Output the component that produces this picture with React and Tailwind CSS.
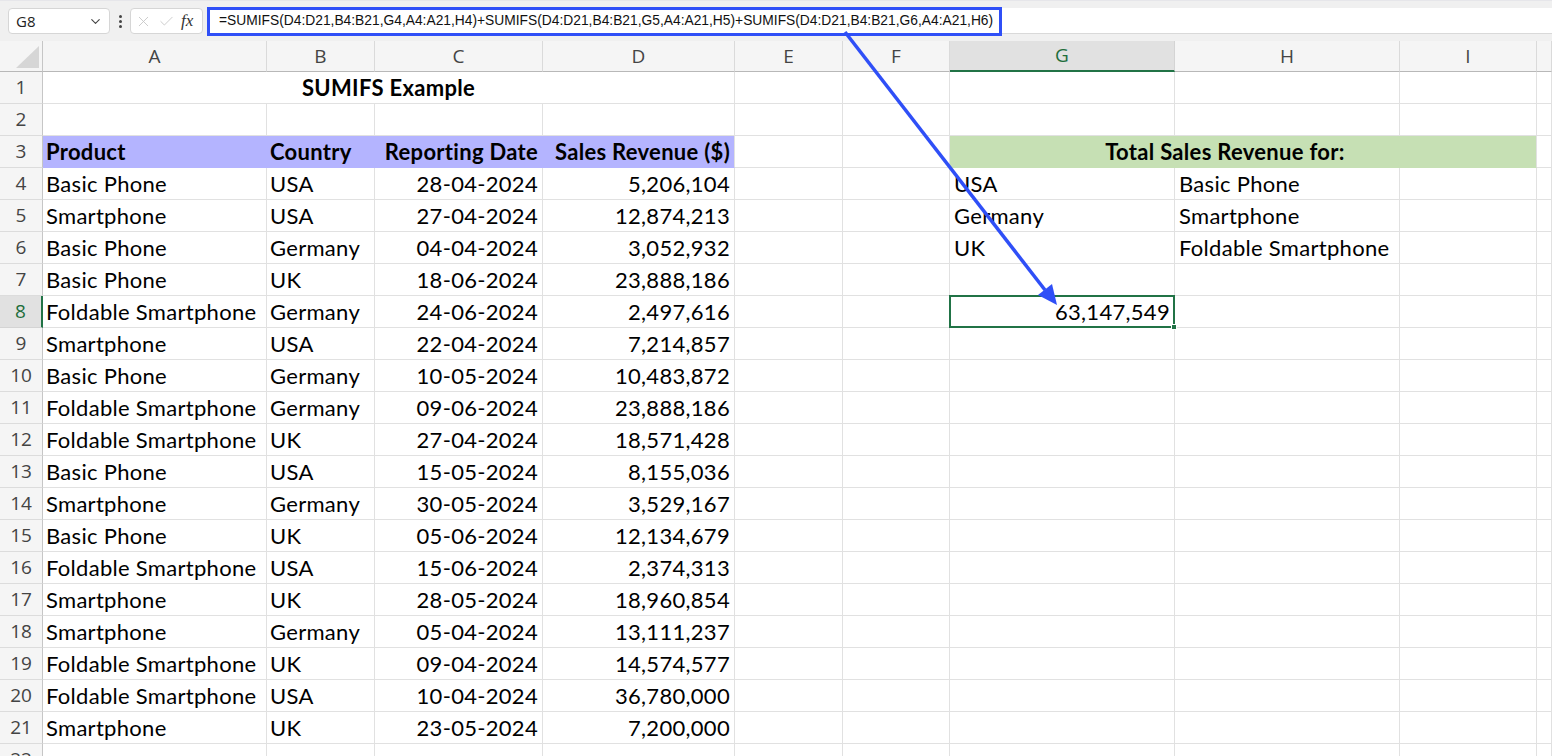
import React from "react";
import { ChevronDown, X, Check } from "lucide-react";

const cols = ["A", "B", "C", "D", "E", "F", "G", "H", "I", ""];

const data = [
  ["Basic Phone", "USA", "28-04-2024", "5,206,104"],
  ["Smartphone", "USA", "27-04-2024", "12,874,213"],
  ["Basic Phone", "Germany", "04-04-2024", "3,052,932"],
  ["Basic Phone", "UK", "18-06-2024", "23,888,186"],
  ["Foldable Smartphone", "Germany", "24-06-2024", "2,497,616"],
  ["Smartphone", "USA", "22-04-2024", "7,214,857"],
  ["Basic Phone", "Germany", "10-05-2024", "10,483,872"],
  ["Foldable Smartphone", "Germany", "09-06-2024", "23,888,186"],
  ["Foldable Smartphone", "UK", "27-04-2024", "18,571,428"],
  ["Basic Phone", "USA", "15-05-2024", "8,155,036"],
  ["Smartphone", "Germany", "30-05-2024", "3,529,167"],
  ["Basic Phone", "UK", "05-06-2024", "12,134,679"],
  ["Foldable Smartphone", "USA", "15-06-2024", "2,374,313"],
  ["Smartphone", "UK", "28-05-2024", "18,960,854"],
  ["Smartphone", "Germany", "05-04-2024", "13,111,237"],
  ["Foldable Smartphone", "UK", "09-04-2024", "14,574,577"],
  ["Foldable Smartphone", "USA", "10-04-2024", "36,780,000"],
  ["Smartphone", "UK", "23-05-2024", "7,200,000"],
];

const lookup = {
  4: ["USA", "Basic Phone"],
  5: ["Germany", "Smartphone"],
  6: ["UK", "Foldable Smartphone"],
};

const formula =
  "=SUMIFS(D4:D21,B4:B21,G4,A4:A21,H4)+SUMIFS(D4:D21,B4:B21,G5,A4:A21,H5)+SUMIFS(D4:D21,B4:B21,G6,A4:A21,H6)";

const Cell = ({ children, className = "" }) => (
  <div
    className={`h-8 border-r border-b border-[#e1e1e1] flex items-center overflow-visible whitespace-nowrap ${className}`}
  >
    {children}
  </div>
);

const RowHead = ({ n, active }) => (
  <div
    className={`h-8 border-b border-r flex items-center justify-center text-[19px] tracking-normal ${
      active
        ? "bg-[#e1e1e1] text-[#1e6e3c] border-r-[#217346] border-r-2 border-b-[#d4d4d4]"
        : "bg-[#f5f5f5] text-[#444] border-r-[#c6c6c6] border-b-[#dcdcdc]"
    }`}
    style={{ fontFamily: "'Open Sans', sans-serif" }}
  >
    {n}
  </div>
);

export default function App() {
  const rows = [];
  for (let r = 1; r <= 22; r++) {
    const cells = [];
    cells.push(<RowHead key="h" n={r} active={r === 8} />);
    if (r === 1) {
      cells.push(
        <Cell key="t" className="col-span-4 justify-center font-bold">
          SUMIFS Example
        </Cell>
      );
      for (let c = 4; c < 10; c++) cells.push(<Cell key={c} />);
    } else if (r === 3) {
      const heads = ["Product", "Country", "Reporting Date", "Sales Revenue ($)"];
      heads.forEach((h, i) =>
        cells.push(
          <Cell
            key={i}
            className={`bg-[#b4b4ff] border-b-[#b4b4ff] font-bold ${
              i < 3 ? "border-r-[#b4b4ff]" : ""
            } ${i < 2 ? "pl-[3px]" : "justify-end pr-[4px]"}`}
          >
            {h}
          </Cell>
        )
      );
      cells.push(<Cell key="e" />);
      cells.push(<Cell key="f" />);
      cells.push(
        <Cell
          key="g"
          className="col-span-3 bg-[#c6e0b4] border-b-[#c6e0b4] justify-center font-bold pr-[36px]"
        >
          Total Sales Revenue for:
        </Cell>
      );
      cells.push(<Cell key="j" />);
    } else {
      const d = r >= 4 && r <= 21 ? data[r - 4] : null;
      for (let c = 0; c < 10; c++) {
        let content = null;
        let cls = "";
        if (d && c < 4) {
          content = d[c];
          cls = c < 2 ? "pl-[3px]" : "justify-end pr-[4px]";
        }
        if (lookup[r] && (c === 6 || c === 7)) {
          content = lookup[r][c - 6];
          cls = "pl-[4px]";
        }
        if (r === 8 && c === 6) {
          cells.push(
            <div
              key={c}
              className="relative h-8 border-r border-b border-[#e1e1e1] flex items-center justify-end pr-[4px]"
            >
              <div className="absolute -top-px -left-px right-[-1px] bottom-[-1px] border-2 border-[#217346]" />
              <div className="absolute right-[-3px] bottom-[-3px] w-[6px] h-[6px] bg-[#217346] border border-white" />
              <span className="relative">63,147,549</span>
            </div>
          );
          continue;
        }
        cells.push(
          <Cell key={c} className={cls}>
            {content}
          </Cell>
        );
      }
    }
    rows.push(...cells);
  }

  return (
    <div
      className="relative w-[1552px] h-[756px] overflow-hidden bg-white text-black"
      style={{ fontFamily: "Lato, 'Open Sans', sans-serif" }}
    >
      {/* formula bar */}
      <div className="h-[41px] bg-[#f0f0f0] flex items-start pt-[7px] border-t-[1px] border-t-[#e6e6ea]">
        <div
          className="ml-[8px] w-[102px] h-[26px] bg-white border border-[#d6d6d6] rounded-[4px] flex items-center justify-between pl-[7px] pr-[6px] text-[15px] text-[#222]"
          style={{ fontFamily: "'Open Sans', sans-serif" }}
        >
          <span>G8</span>
          <ChevronDown size={15} strokeWidth={1.8} className="text-[#444]" />
        </div>
        <div className="w-[20px] h-[26px] flex flex-col items-center justify-center gap-[2px]">
          <span className="w-[3px] h-[3px] rounded-full bg-[#444]" />
          <span className="w-[3px] h-[3px] rounded-full bg-[#444]" />
          <span className="w-[3px] h-[3px] rounded-full bg-[#444]" />
        </div>
        <div className="w-[73px] h-[26px] bg-white border border-[#d6d6d6] rounded-[4px] flex items-center pl-[4px] gap-[6px]">
          <X size={17} strokeWidth={1.2} className="text-[#c4c4c4]" />
          <Check size={17} strokeWidth={1.2} className="text-[#c4c4c4]" />
          <span
            className="italic text-[17px] text-[#333] leading-none -mt-[2px]"
            style={{ fontFamily: "'Liberation Serif', serif" }}
          >
            fx
          </span>
        </div>
        <div className="ml-[4px] flex-1 h-[26px] bg-white flex border-b border-[#d9d9d9]">
          <div
            className="w-[795px] h-[29px] -mt-[1px] border-[3px] border-[#2f4ff7] flex items-center pl-[9px] text-[13.8px] text-[#111] whitespace-nowrap"
            style={{ fontFamily: "'Liberation Sans', sans-serif" }}
          >
            {formula}
          </div>
        </div>
      </div>

      {/* grid */}
      <div className="grid grid-cols-[43px_224px_108px_168px_192px_108px_107px_225px_225px_137px_1fr] text-[22px] tracking-[0.3px] leading-none">
        <div className="h-[31px] bg-[#f5f5f5] border-r border-b border-r-[#c6c6c6] border-b-[#b8b8b8] relative">
          <svg className="absolute right-[3px] bottom-[3px]" width="23" height="22" viewBox="0 0 23 22">
            <polygon points="23,0 23,22 0,22" fill="#d6d6d6" />
          </svg>
        </div>
        {cols.map((c, i) => (
          <div
            key={i}
            className={`h-[31px] flex items-center justify-center text-[19px] tracking-normal ${
              c === "G"
                ? "bg-[#e1e1e1] text-[#1e6e3c] border-b-2 border-b-[#217346] border-r border-r-[#d4d4d4]"
                : "bg-[#f5f5f5] text-[#444] border-b border-b-[#b8b8b8] border-r border-r-[#dadada]"
            }`}
            style={{ fontFamily: "'Open Sans', sans-serif" }}
          >
            {c}
          </div>
        ))}
        {rows}
      </div>

      {/* annotation arrow */}
      <svg
        className="absolute left-0 top-0 pointer-events-none"
        width="1552"
        height="756"
      >
        <line x1="845" y1="32" x2="1045" y2="290" stroke="#2f4ff7" strokeWidth="3.5" />
        <polygon points="1057,305 1038,295 1052,284" fill="#2f4ff7" />
      </svg>
    </div>
  );
}
